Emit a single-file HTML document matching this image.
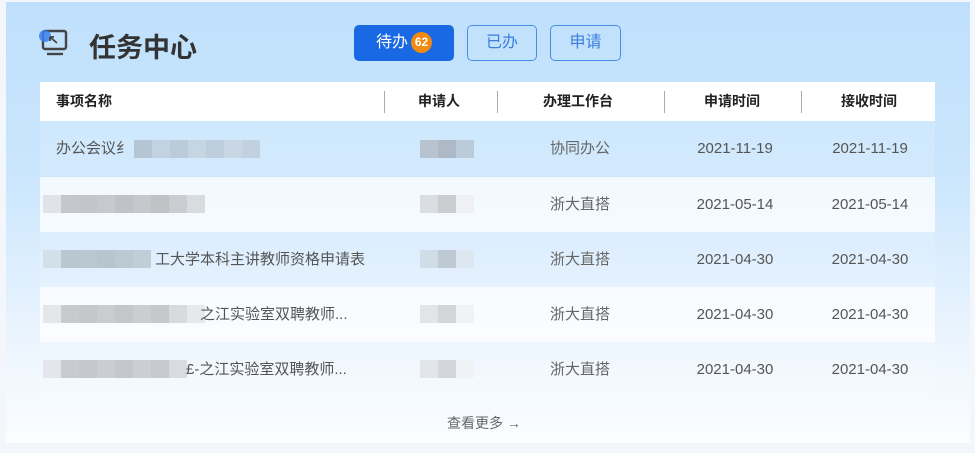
<!DOCTYPE html><html><head><meta charset="utf-8"><style>
*{margin:0;padding:0;box-sizing:border-box}
body{width:975px;height:453px;background:#f3f7fb;font-family:"Liberation Sans","Noto Sans CJK SC",sans-serif;position:relative;overflow:hidden}
.card{position:absolute;left:6px;top:2px;width:964px;height:441px;background:linear-gradient(#bfe0fc 0%,#cbe6fd 40%,#eaf4fe 75%,#fbfdff 100%)}
.title{position:absolute;left:89px;top:26px;font-size:27px;font-weight:bold;color:#333}
.btn{position:absolute;top:25px;height:36px;border-radius:5px;font-size:16px;text-align:center;line-height:34px}
.b1{left:354px;width:100px;background:#1a69e4;color:#fff;border:1px solid #1a69e4}
.b2{left:467px;width:70px;border:1px solid #4a8de8;color:#3a7ee0}
.b3{left:550px;width:71px;border:1px solid #4a8de8;color:#3a7ee0}
.badge{display:inline-block;width:21px;height:21px;border-radius:50%;background:#f28a10;color:#fff;font-size:12px;line-height:21px;font-weight:bold;vertical-align:1px;margin-left:3px}
.head{position:absolute;left:40px;top:82px;width:895px;height:39px;background:#fff;font-size:14px;font-weight:bold;color:#222}
.head span,.row span{position:absolute;top:0;line-height:39px}
.sep{position:absolute;top:9px;width:1px;height:22px;background:#aaa}
.row{position:absolute;left:40px;width:895px;height:55px;font-size:15px;color:#555}
.row span{line-height:55px}
.w{background:rgba(255,255,255,.75)}
.l{background:rgba(255,255,255,.15)}
.c{text-align:center}
.blk{position:absolute;height:18px;display:flex}
.blk i{display:block;width:18px;height:18px}
.more{position:absolute;left:447px;top:413px;font-size:14px;color:#666}
</style></head><body>
<div class="card"></div>
<svg style="position:absolute;left:38px;top:28px" width="40" height="32" viewBox="0 0 40 32"><rect x="5" y="3" width="23" height="18" rx="2" fill="none" stroke="#444" stroke-width="2.4"/><line x1="9" y1="26" x2="25" y2="26" stroke="#444" stroke-width="2.4"/><circle cx="7" cy="8" r="6" fill="#3d7ff0" opacity=".85"/><path d="M12 9l7 6M12 9v4M12 9h4" stroke="#444" stroke-width="1.8" fill="none"/></svg>
<div class="title">任务中心</div>
<div class="btn b1">待办<span class="badge">62</span></div>
<div class="btn b2">已办</div>
<div class="btn b3">申请</div>
<div class="head">
<span style="left:16px">事项名称</span>
<div class="sep" style="left:344px"></div>
<span style="left:378px">申请人</span>
<div class="sep" style="left:457px"></div>
<span style="left:503px">办理工作台</span>
<div class="sep" style="left:624px"></div>
<span style="left:664px">申请时间</span>
<div class="sep" style="left:761px"></div>
<span style="left:801px">接收时间</span>
</div>

<div class="row l" style="top:121px"><span style="left:16px">办公会议纟</span><div class="blk" style="left:94px;top:19px"><i style="background:#b5c5d4"></i><i style="background:#c3d2e0"></i><i style="background:#bccbd9"></i><i style="background:#c6d5e2"></i><i style="background:#bfcedc"></i><i style="background:#c9d7e4"></i><i style="background:#c2d1df"></i></div><div class="blk" style="left:380px;top:19px"><i style="background:#b7c3cf"></i><i style="background:#adb9c6"></i><i style="background:#bccbda"></i></div><span class="c" style="left:470px;width:140px;color:#666">协同办公</span><span class="c" style="left:630px;width:130px;color:#555">2021-11-19</span><span class="c" style="left:765px;width:130px">2021-11-19</span></div>

<div class="row w" style="top:177px"><div class="blk" style="left:3px;top:18px"><i style="background:#e0e3e7"></i><i style="background:#c4c7cb"></i><i style="background:#c2c5c9"></i><i style="background:#c6c9cd"></i><i style="background:#bfc2c8"></i><i style="background:#c6c9cc"></i><i style="background:#bfc3c6"></i><i style="background:#c9ccd0"></i><i style="background:#d9dcdf"></i></div><div class="blk" style="left:380px;top:18px"><i style="background:#dadde2"></i><i style="background:#cccdd1"></i><i style="background:#eef0f3"></i></div><span class="c" style="left:470px;width:140px;color:#666">浙大直搭</span><span class="c" style="left:630px;width:130px">2021-05-14</span><span class="c" style="left:765px;width:130px">2021-05-14</span></div>

<div class="row l" style="top:232px"><div class="blk" style="left:3px;top:18px"><i style="background:#d2e0ea"></i><i style="background:#b9c7d1"></i><i style="background:#bac8d2"></i><i style="background:#b7c5cf"></i><i style="background:#bbc9d3"></i><i style="background:#c0ced8"></i></div><span style="left:115px">工大学本科主讲教师资格申请表</span><div class="blk" style="left:380px;top:18px"><i style="background:#d0dde7"></i><i style="background:#bdc9d3"></i><i style="background:#dce7ef"></i></div><span class="c" style="left:470px;width:140px;color:#666">浙大直搭</span><span class="c" style="left:630px;width:130px">2021-04-30</span><span class="c" style="left:765px;width:130px">2021-04-30</span></div>

<div class="row w" style="top:287px"><div class="blk" style="left:3px;top:18px"><i style="background:#e4e6e9"></i><i style="background:#c8cacd"></i><i style="background:#c5c7ca"></i><i style="background:#cacccf"></i><i style="background:#c4c6c9"></i><i style="background:#cbcdd0"></i><i style="background:#c6c8cb"></i><i style="background:#d8dadd"></i><i style="background:#e6e8eb"></i></div><span style="left:160px">之江实验室双聘教师...</span><div class="blk" style="left:380px;top:18px"><i style="background:#e2e4e8"></i><i style="background:#d3d5d9"></i><i style="background:#f0f2f4"></i></div><span class="c" style="left:470px;width:140px;color:#666">浙大直搭</span><span class="c" style="left:630px;width:130px">2021-04-30</span><span class="c" style="left:765px;width:130px">2021-04-30</span></div>

<div class="row l" style="top:342px"><div class="blk" style="left:3px;top:18px"><i style="background:#e3e7eb"></i><i style="background:#c8ccd0"></i><i style="background:#c5c9cd"></i><i style="background:#caced2"></i><i style="background:#c4c8cc"></i><i style="background:#cbcfd3"></i><i style="background:#c6cace"></i><i style="background:#d8dce0"></i></div><span style="left:146px">£-之江实验室双聘教师...</span><div class="blk" style="left:380px;top:18px"><i style="background:#e2e6ea"></i><i style="background:#d3d7db"></i><i style="background:#f0f3f6"></i></div><span class="c" style="left:470px;width:140px;color:#666">浙大直搭</span><span class="c" style="left:630px;width:130px">2021-04-30</span><span class="c" style="left:765px;width:130px">2021-04-30</span></div>

<div class="more">查看更多 →</div>
</body></html>
